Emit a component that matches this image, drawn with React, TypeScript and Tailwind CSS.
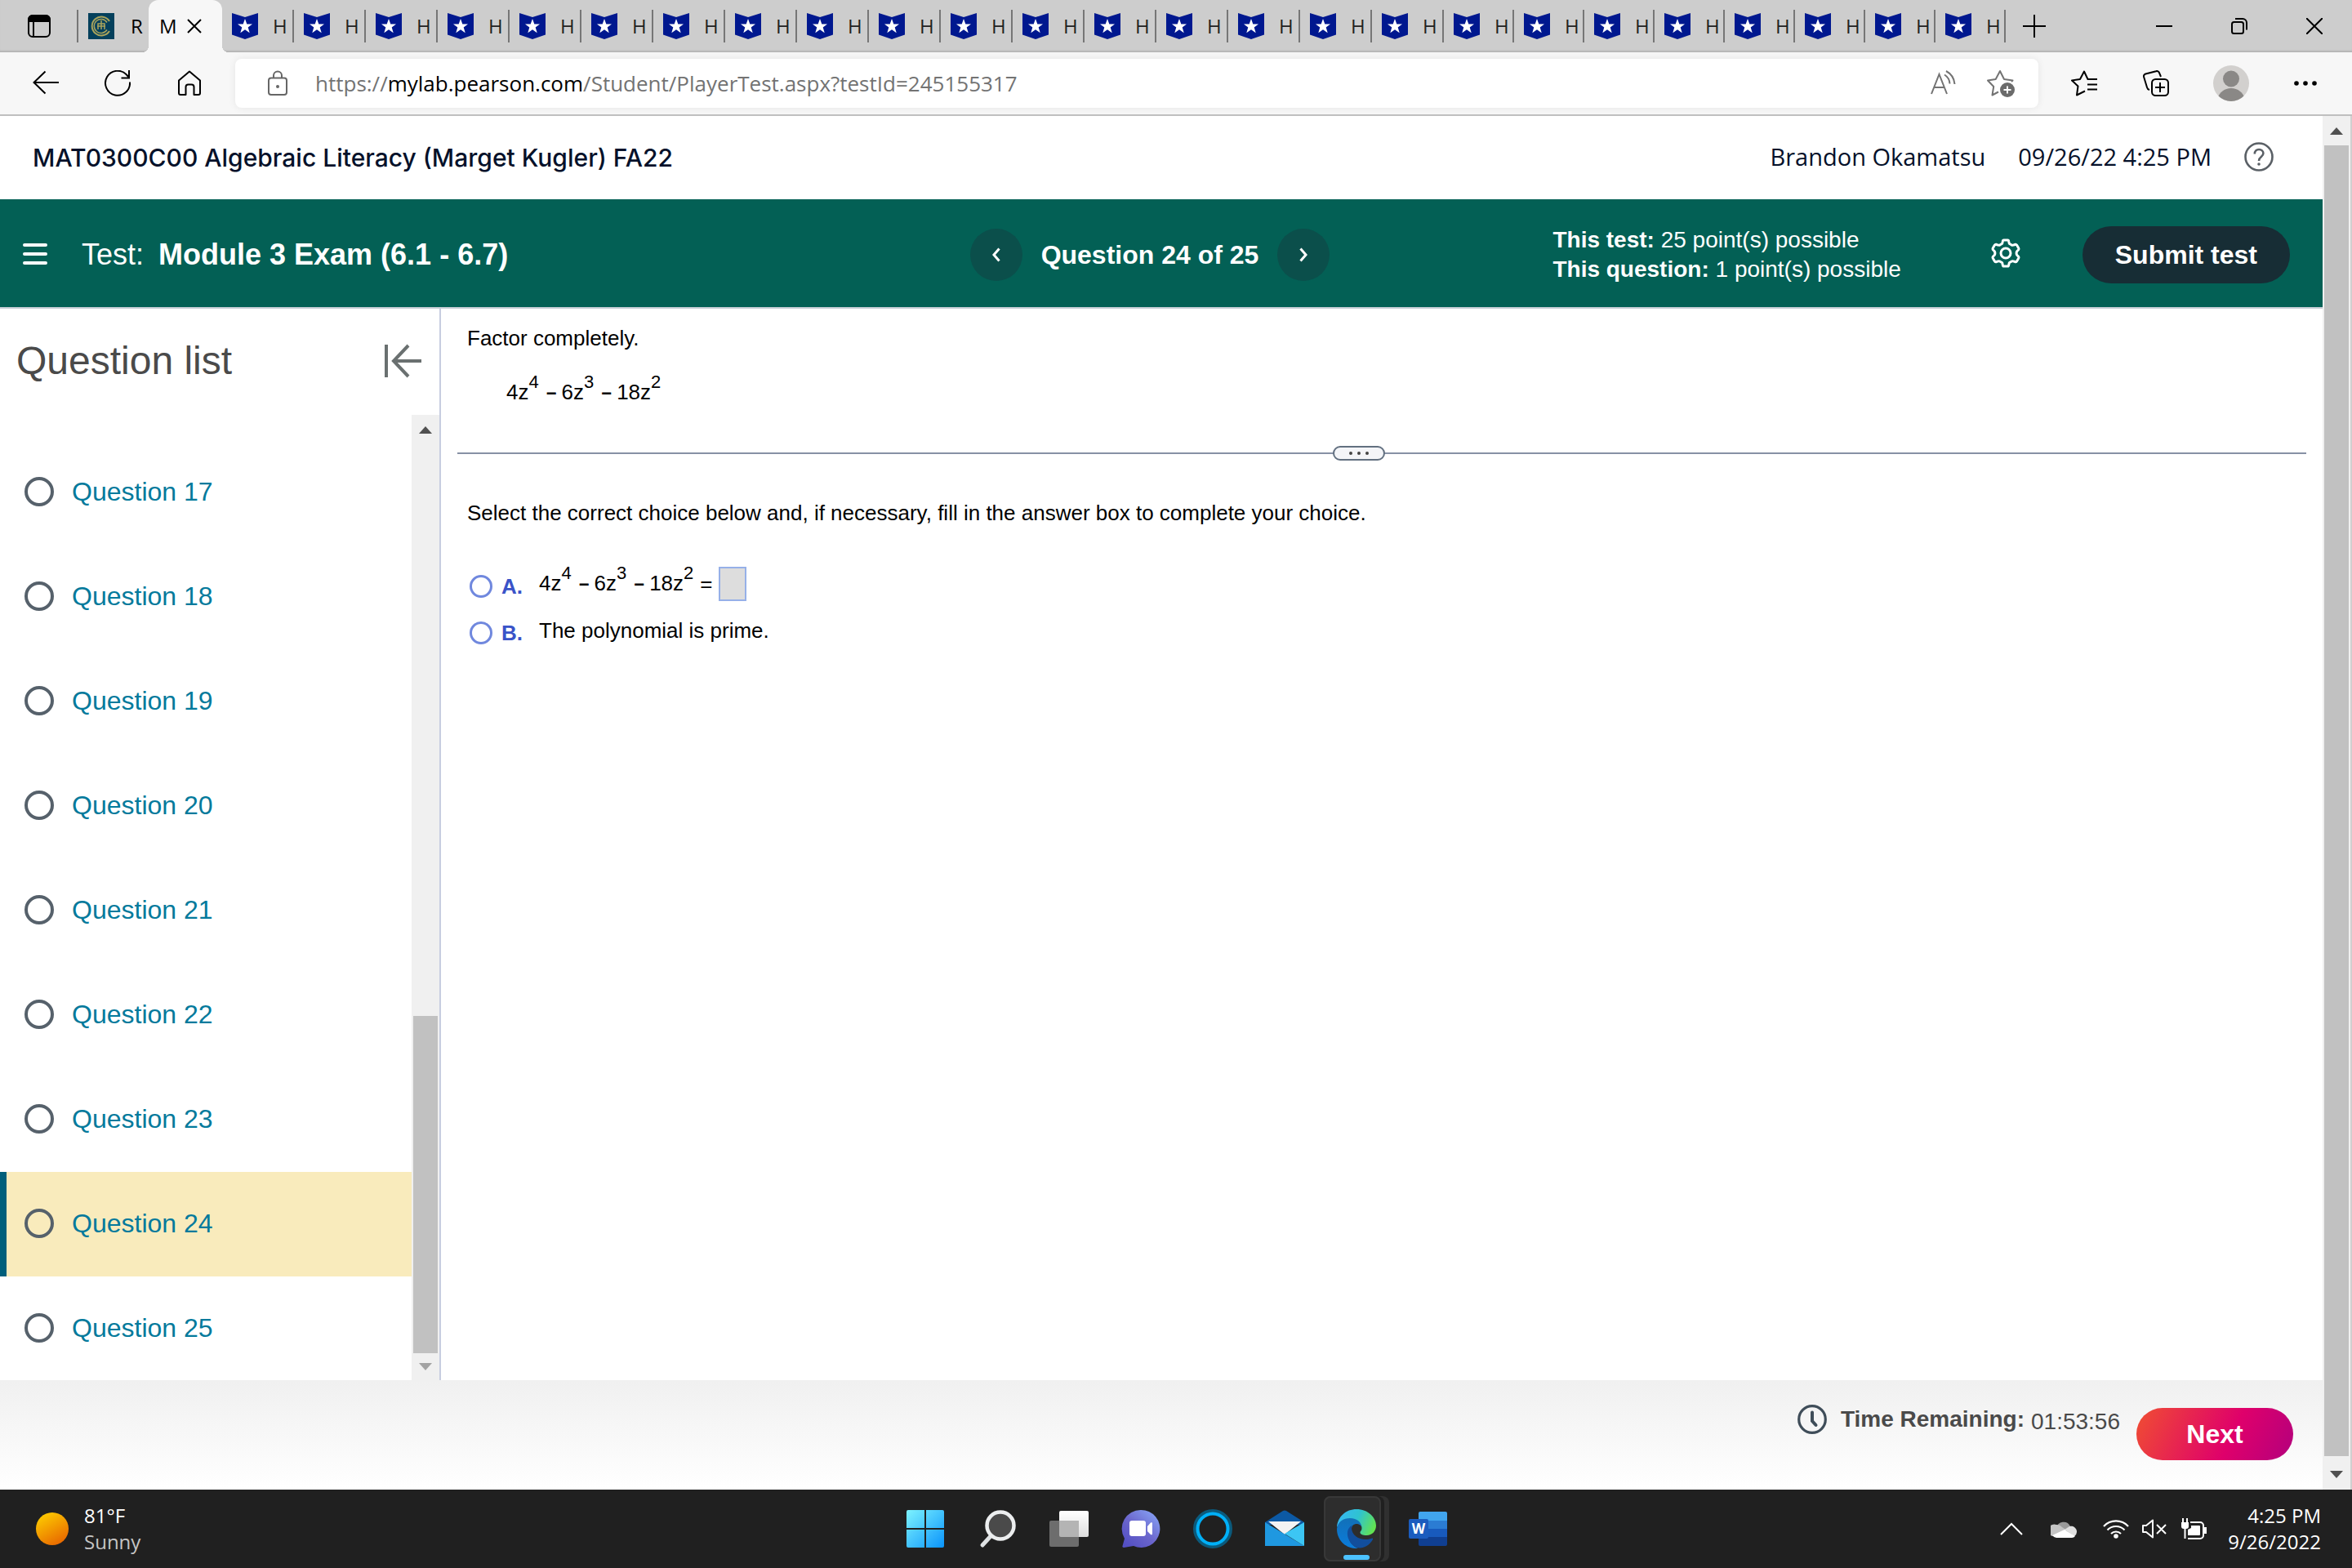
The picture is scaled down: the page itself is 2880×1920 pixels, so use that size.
import React, { useState } from "react"

const ui = "font-['Open_Sans',sans-serif]"
const arial = "font-['Liberation_Sans',sans-serif]"

const tabs = Array.from({ length: 25 }, (_, i) => i)
const questions = [17, 18, 19, 20, 21, 22, 23, 24, 25]

function FlagIcon() {
  return (
    <svg viewBox="0 0 32 32" className="size-8 shrink-0" aria-hidden="true">
      <path d="M0 0l16 5L32 0v26.500L16 32 0 26.500z" fill="#00188f" />
      <path d="M16 7l2.300 6.500h6.700l-5.300 4 2 6.700L16 20.200l-5.700 4 2-6.700-5.300-4h6.700z" fill="#fff" />
    </svg>
  )
}

function TabStrip() {
  return (
    <div className={`flex h-16 bg-[#cdcdcd] text-2xl text-black shadow-[inset_0_-3px_3px_-2px_rgba(0,0,0,0.2)] ${ui}`}>
      <button aria-label="Tab actions" className="flex w-[94px] shrink-0 items-center justify-center pl-[2px]">
        <svg viewBox="0 0 28 28" className="size-7" fill="none" stroke="#000" strokeWidth="2">
          <rect x="1" y="1" width="26" height="26" rx="5" />
          <path d="M1 8V6a5 5 0 0 1 5-5h16a5 5 0 0 1 5 5v2z" fill="#000" />
          <path d="M7 8v19" />
        </svg>
      </button>
      <div className="flex w-[88px] shrink-0 items-center">
        <span className="h-10 w-[2px] shrink-0 bg-[#767676]" />
        <svg viewBox="0 0 32 32" className="ml-3 size-8 shrink-0" fill="none" stroke="#a8a35c">
          <rect width="32" height="32" fill="#04405c" stroke="none" />
          <path d="M26 10A11.500 11.500 0 1 0 26 22" strokeWidth="2" />
          <path d="M23 11.500A8.500 8.500 0 1 0 23 20.500" strokeWidth="1.500" />
          <path d="M12 20v-7h8v7M16 9v11M11 16h10" strokeWidth="1.500" />
        </svg>
        <span className="ml-5">R</span>
      </div>
      <div className="relative flex w-[90px] shrink-0 items-center gap-3 rounded-t-xl bg-[#f7f7f7] pl-[13px]">
        <span className="absolute bottom-0 -left-2 size-2 bg-[radial-gradient(circle_at_0_0,transparent_8px,#f7f7f7_8px)]" />
        <span className="absolute -right-2 bottom-0 size-2 bg-[radial-gradient(circle_at_100%_0,transparent_8px,#f7f7f7_8px)]" />
        <span>M</span>
        <button aria-label="Close tab">
          <svg viewBox="0 0 18 18" className="size-[18px]" stroke="#000" strokeWidth="2">
            <path d="M1 1l16 16M17 1L1 17" />
          </svg>
        </button>
      </div>
      {tabs.map((t) => (
        <div key={t} className={`flex shrink-0 items-center pl-3 ${t < 17 ? "w-[88px]" : "w-[86px]"}`}>
          <FlagIcon />
          <span className="ml-[18px] text-[#222]">H</span>
          <span className="ml-auto h-10 w-[2px] shrink-0 bg-[#767676]" />
        </div>
      ))}
      <button aria-label="New tab" className="ml-[21px] flex items-center">
        <svg viewBox="0 0 28 28" className="size-7" stroke="#000" strokeWidth="2">
          <path d="M14 0v28M0 14h28" />
        </svg>
      </button>
      <div className="ml-auto flex">
        <button aria-label="Minimize" className="flex w-[92px] items-center justify-center">
          <svg viewBox="0 0 20 20" className="size-5" stroke="#000" strokeWidth="2"><path d="M0 10h20" /></svg>
        </button>
        <button aria-label="Restore" className="flex w-[92px] items-center justify-center">
          <svg viewBox="0 0 20 20" className="size-5" fill="none" stroke="#000" strokeWidth="2">
            <rect x="1" y="5" width="14" height="14" rx="2.500" />
            <path d="M5 1h9a5 5 0 0 1 5 5v8.500" />
          </svg>
        </button>
        <button aria-label="Close" className="flex w-[92px] items-center justify-center">
          <svg viewBox="0 0 20 20" className="size-5" stroke="#000" strokeWidth="2"><path d="M0 0l20 20M20 0L0 20" /></svg>
        </button>
      </div>
    </div>
  )
}

function Toolbar() {
  return (
    <div className={`flex h-[78px] items-center border-b-2 border-[#bfbfbf] bg-[#f7f7f7] ${ui}`}>
      <div className="flex w-72 shrink-0 items-center gap-14 pl-10">
        <button aria-label="Back">
          <svg viewBox="0 0 32 32" className="size-8" fill="none" stroke="#000" strokeWidth="2"><path d="M32 15H1.500M15.500 1.500L1.500 15l14 13.500" /></svg>
        </button>
        <button aria-label="Refresh">
          <svg viewBox="0 0 32 32" className="size-8" fill="none" stroke="#000" strokeWidth="2">
            <path d="M31 14.500A15 15 0 1 1 27 5.500L30 9" />
            <path d="M30 0v9.500h-9.500" />
          </svg>
        </button>
        <button aria-label="Home">
          <svg viewBox="0 0 32 32" className="size-8" fill="none" stroke="#000" strokeWidth="2">
            <path d="M3 12.500L16 1.500l13 11V28a2 2 0 0 1-2 2h-5.500v-9.500a3 3 0 0 0-3-3h-4a3 3 0 0 0-3 3V30H5a2 2 0 0 1-2-2z" strokeLinejoin="round" />
          </svg>
        </button>
      </div>
      <div className="flex h-[60px] flex-1 items-center rounded-lg bg-white pr-7 pl-10 shadow-[0_0_10px_rgba(0,0,0,0.08)]">
        <svg viewBox="0 0 24 32" className="h-8 w-6 shrink-0" fill="none" stroke="#666" strokeWidth="2">
          <rect x="1" y="9.500" width="22" height="20.500" rx="3" />
          <path d="M7 9.500V6.500a5 5 0 0 1 10 0v3" />
          <circle cx="12" cy="20" r="2" fill="#666" stroke="none" />
        </svg>
        <a href="#url" className="ml-[34px] text-[26px] text-[#737373]">
          https://<span className="text-black">mylab.pearson.com</span>/Student/PlayerTest.aspx?testId=245155317
        </a>
        <button aria-label="Read aloud" className="ml-auto">
          <svg viewBox="0 0 32 32" className="size-8" fill="none" stroke="#737373" strokeWidth="2">
            <path d="M1 29L10.500 5 20 29M4 21h13" />
            <path d="M17 5.500a14 14 0 0 1 6.500 11M19 1a20 20 0 0 1 10.500 16" />
          </svg>
        </button>
        <button aria-label="Add to favorites" className="ml-9">
          <svg viewBox="0 0 36 36" className="size-9" fill="none" stroke="#737373" strokeWidth="2">
            <path d="M15 28.500l-7.500 4 1.700-10.500L2 14.500l9.700-1.500L17 3l5 10 10.500 1.500-1.500 1.500" strokeLinejoin="round" />
            <circle cx="26" cy="26" r="9" fill="#6b6b6b" stroke="none" />
            <path d="M26 21.500v9M21.500 26h9" stroke="#fff" />
          </svg>
        </button>
      </div>
      <div className="flex shrink-0 items-center pr-[42px] pl-10">
        <button aria-label="Favorites">
          <svg viewBox="0 0 32 32" className="size-8" fill="none" stroke="#000" strokeWidth="2" strokeLinejoin="round">
            <path d="M32 11H20.500L16 1.500 11 11 1 12.500l7.500 7L7 30.500l10-5" />
            <path d="M20 17.500h12M20 23.500h12" />
          </svg>
        </button>
        <button aria-label="Collections" className="ml-14">
          <svg viewBox="0 0 32 32" className="size-8" fill="none" stroke="#000" strokeWidth="2">
            <rect x="11" y="11" width="20" height="20" rx="4.500" />
            <path d="M21 15v12M15 21h12M8 24a4 4 0 0 1-3-3L1.200 8.500a3 3 0 0 1 2-4L16 1.200a3 3 0 0 1 4 2L22 8" />
          </svg>
        </button>
        <button aria-label="Profile" className="ml-[54px]">
          <svg viewBox="0 0 44 44" className="size-11">
            <clipPath id="avatar"><circle cx="22" cy="22" r="22" /></clipPath>
            <g clipPath="url(#avatar)">
              <rect width="44" height="44" fill="#d2d0ce" />
              <circle cx="22" cy="16.500" r="10" fill="#8a8886" />
              <path d="M5 42c2-9 9-14 17-14s15 5 17 14v2H5z" fill="#8a8886" />
            </g>
          </svg>
        </button>
        <button aria-label="Settings and more" className="ml-[54px]">
          <svg viewBox="0 0 30 30" className="size-[30px]">
            <circle cx="4" cy="15" r="2.800" /><circle cx="15" cy="15" r="2.800" /><circle cx="26" cy="15" r="2.800" />
          </svg>
        </button>
      </div>
    </div>
  )
}

function CourseHeader() {
  return (
    <header className="flex h-[102px] shrink-0 items-center pr-[60px] pl-10 text-[#05112a]">
      <h1 className="font-['Inter',sans-serif] text-[30px] font-medium">MAT0300C00 Algebraic Literacy (Marget Kugler) FA22</h1>
      <div className={`ml-auto flex items-center pb-[2px] text-[29px] ${ui}`}>
        <span>Brandon Okamatsu</span>
        <span className="ml-10">09/26/22 4:25 PM</span>
        <button aria-label="Help" className="ml-10">
          <svg viewBox="0 0 36 36" className="size-9" fill="none" stroke="#5a6066" strokeWidth="2.600">
            <circle cx="18" cy="18" r="16.500" />
            <path d="M12.800 14.500c0-3.500 2.200-5.500 5.300-5.500s5.300 2 5.300 4.800c0 4.200-5.300 4.200-5.300 8.700v.5" />
            <circle cx="18" cy="27" r="1.800" fill="#5a6066" stroke="none" />
          </svg>
        </button>
      </div>
    </header>
  )
}

function TestBar() {
  return (
    <div className="grid h-[134px] shrink-0 grid-cols-[1fr_440px_1fr] items-center border-b-2 border-[#c7cfd6] bg-[#036055] pt-1 pr-10 pl-3 text-white">
      <div className="flex items-center pl-4">
        <button aria-label="Menu">
          <svg viewBox="0 0 30 28" className="h-7 w-[30px]" stroke="#fff" strokeWidth="4" strokeLinecap="round">
            <path d="M2 2h26M2 13h26M2 24h26" />
          </svg>
        </button>
        <span className="ml-[42px] text-4xl">Test:</span>
        <h2 className="ml-[18px] text-4xl font-bold">Module 3 Exam (6.1 - 6.7)</h2>
      </div>
      <div className="flex items-center justify-between">
        <button aria-label="Previous question" className="flex size-16 items-center justify-center rounded-full bg-[#0b4f4b]">
          <svg viewBox="0 0 12 18" className="h-[18px] w-3" fill="none" stroke="#fff" strokeWidth="3"><path d="M9.500 1.500L3 9l6.500 7.500" /></svg>
        </button>
        <span className="text-[32px] font-bold">Question 24 of 25</span>
        <button aria-label="Next question" className="flex size-16 items-center justify-center rounded-full bg-[#0b4f4b]">
          <svg viewBox="0 0 12 18" className="h-[18px] w-3" fill="none" stroke="#fff" strokeWidth="3"><path d="M2.500 1.500L9 9l-6.500 7.500" /></svg>
        </button>
      </div>
      <div className="flex items-center justify-end">
        <div className="text-[28px] leading-9">
          <p><b>This test:</b> 25 point(s) possible</p>
          <p><b>This question:</b> 1 point(s) possible</p>
        </div>
        <button aria-label="Settings" className="ml-[110px] pb-1">
          <svg viewBox="0 0 36 36" className="size-9" fill="none" stroke="#fff" strokeWidth="3" strokeLinejoin="round">
            <path d="M15.500 2h5q1 0 1.200 1.500l.6 2.700 2.500 1.500q1.500 1 3 .3l1.700-.7q1.300-.3 2 .8l2.200 3.700q.6 1.200-.3 2.200l-1.700 1.700q-1.200 2.300 0 4.600l1.700 1.700q.9 1 .3 2.200l-2.200 3.700q-.7 1.100-2 .8l-1.700-.7q-1.500-.7-3 .3l-2.500 1.500-.6 2.700Q21.500 34 20.500 34h-5q-1 0-1.200-1.500l-.6-2.700-2.500-1.500q-1.500-1-3-.3l-1.700.7q-1.300.3-2-.8l-2.200-3.700q-.6-1.200.3-2.200l1.700-1.700q1.200-2.300 0-4.600l-1.700-1.700q-.9-1-.3-2.200L4.500 8.100q.7-1.100 2-.8l1.700.7q1.500.7 3-.3l2.500-1.500.6-2.700Q14.500 2 15.500 2z" />
            <circle cx="18" cy="18" r="6" />
          </svg>
        </button>
        <button className="ml-[76px] h-[70px] rounded-full bg-[#172d35] px-10 text-[32px] font-bold">Submit test</button>
      </div>
    </div>
  )
}

function Arrow({ up, color }: { up?: boolean; color: string }) {
  return (
    <svg viewBox="0 0 16 9" className="h-[9px] w-4" fill={color}>
      <path d={up ? "M0 9L8 0l8 9z" : "M0 0l8 9 8-9z"} />
    </svg>
  )
}

function QuestionList() {
  const [current, setCurrent] = useState(24)
  return (
    <aside className="flex w-[540px] shrink-0 flex-col border-r-2 border-[#c7cde0]">
      <div className="flex h-[130px] shrink-0 items-center justify-between pr-[22px] pb-[2px] pl-5">
        <h2 className="text-[48px] leading-none text-[#4a4a4a]">Question list</h2>
        <button aria-label="Collapse question list">
          <svg viewBox="0 0 46 42" className="h-[42px] w-[46px]" fill="none" stroke="#6a7070" strokeWidth="4">
            <path d="M3 1v40M46 21H12M30 2L12 21l18 19" />
          </svg>
        </button>
      </div>
      <div className="flex min-h-0 flex-1">
        <ul className="flex flex-1 flex-col pt-[31px]">
          {questions.map((q) => (
            <li key={q}>
              <button
                onClick={() => setCurrent(q)}
                className={`flex h-32 w-full items-center gap-[22px] border-l-8 pb-[2px] pl-[22px] text-[32px] text-[#047a9c] ${
                  q === current ? "border-[#005f7b] bg-[#f9ebbc]" : "border-transparent"
                }`}
              >
                <span className="size-9 rounded-full border-4 border-[#56616b]" />
                Question {q}
              </button>
            </li>
          ))}
        </ul>
        <div className="flex w-[34px] flex-col items-center bg-[#f0f0f0] pt-[14px] pb-[12px]">
          <Arrow up color="#505050" />
          <div className="mt-auto mb-[12px] h-[413px] w-[30px] bg-[#c1c1c1]" />
          <Arrow color="#a3a3a3" />
        </div>
      </div>
    </aside>
  )
}

function Minus() {
  return <span className="mr-[6px] ml-[9px] text-[22px] font-bold">−</span>
}

function Polynomial() {
  return (
    <span className="flex items-baseline">
      4z<span className="-translate-y-[14px] text-[22px]">4</span>
      <Minus />
      6z<span className="-translate-y-[14px] text-[22px]">3</span>
      <Minus />
      18z<span className="-translate-y-[14px] text-[22px]">2</span>
    </span>
  )
}

const radio = "size-7 shrink-0 appearance-none rounded-full border-3 border-[#7088de] bg-white checked:bg-[#7088de]"
const choiceLabel = "flex w-[88px] items-center pt-[6px] pl-[3px] font-bold text-[#3a53c8]"

function Exercise() {
  return (
    <main className="flex-1 px-5 text-[26px] leading-[30px] text-black">
      <div className="flex h-[176px] flex-col pt-[21px] pl-3">
        <p>Factor completely.</p>
        <p className="mt-[36px] pl-12"><Polynomial /></p>
      </div>
      <div className="relative h-[2px] bg-[#8791a5]">
        <button aria-label="Resize panes" className="absolute -top-2 left-[1072px] flex h-[18px] w-16 items-center justify-center gap-[6px] rounded-full border-2 border-[#627080] bg-[#f4f5f8]">
          <span className="size-1 rounded-full bg-[#444]" />
          <span className="size-1 rounded-full bg-[#444]" />
          <span className="size-1 rounded-full bg-[#444]" />
        </button>
      </div>
      <fieldset className="pt-[57px] pl-3">
        <legend className="contents">Select the correct choice below and, if necessary, fill in the answer box to complete your choice.</legend>
        <div className="mt-[45px] flex h-[54px] items-center">
          <label htmlFor="choice-a" className={choiceLabel}>
            <input id="choice-a" type="radio" name="choice" className={radio} />
            <span className="ml-[11px]">A.</span>
          </label>
          <Polynomial />
          <span className="mr-[7px] ml-[8px]">=</span>
          <input aria-label="Answer" className="h-[42px] w-[34px] border-2 border-[#96b0e8] bg-[#ddd]" />
        </div>
        <div className="mt-[3px] flex h-[54px] items-center">
          <label htmlFor="choice-b" className={choiceLabel}>
            <input id="choice-b" type="radio" name="choice" className={radio} />
            <span className="ml-[11px]">B.</span>
          </label>
          <span>The polynomial is prime.</span>
        </div>
      </fieldset>
    </main>
  )
}

function TestFooter() {
  return (
    <footer className="flex h-[134px] shrink-0 items-start justify-end bg-linear-to-b from-[#f0f0f0] to-white pt-[30px] pr-9 text-[28px] text-[#4a4a4a]">
      <svg viewBox="0 0 36 36" className="size-9" fill="none" stroke="#3f4d59" strokeWidth="3.200" strokeLinecap="round">
        <circle cx="18" cy="18" r="16.300" />
        <path d="M18 9.500V20l4.500 5" strokeWidth="4" />
      </svg>
      <p className="ml-[17px] flex items-start leading-9">
        <b>Time Remaining:</b>
        <span className="ml-[8px] pt-[3px]">01:53:56</span>
      </p>
      <button className="mt-1 ml-5 h-16 w-48 rounded-full bg-linear-[115deg] from-[#f04e32] via-[#df006b] via-60% to-[#b3007d] text-[32px] font-bold text-white">Next</button>
    </footer>
  )
}

const apps = [
  {
    label: "Start",
    icon: (
      <>
        <linearGradient id="win" x1="0" y1="0" x2="1" y2="1" gradientUnits="objectBoundingBox">
          <stop offset="0" stopColor="#7df3ff" /><stop offset="1" stopColor="#0a94fb" />
        </linearGradient>
        <path fill="url(#win)" d="M3 1h20v22H1V3a2 2 0 0 1 2-2zM25 1h20a2 2 0 0 1 2 2v20H25zM1 25h22v22H3a2 2 0 0 1-2-2zM25 25h22v20a2 2 0 0 1-2 2H25z" />
      </>
    ),
  },
  {
    label: "Search",
    icon: (
      <>
        <path d="M17 32L6 44" stroke="#dfe2e4" strokeWidth="5" strokeLinecap="round" />
        <circle cx="28" cy="20" r="16.500" fill="#4a4a4a" stroke="#eceeef" strokeWidth="4.500" />
      </>
    ),
  },
  {
    label: "Task view",
    icon: (
      <>
        <linearGradient id="tv" x1="0" y1="0" x2="0" y2="1"><stop stopColor="#fff" /><stop offset="1" stopColor="#ddd" /></linearGradient>
        <rect x="12" y="2" width="36" height="32" rx="2" fill="url(#tv)" />
        <rect x="0" y="14" width="36" height="32" rx="2" fill="#6d6d6d" />
        <path d="M12 14h24v20H14a2 2 0 0 1-2-2z" fill="#b4b4b4" />
      </>
    ),
  },
  {
    label: "Chat",
    icon: (
      <>
        <linearGradient id="chat" x1=".1" y1=".9" x2=".8" y2=".1">
          <stop stopColor="#5450c4" /><stop offset=".5" stopColor="#6b66cc" /><stop offset="1" stopColor="#8298ee" />
        </linearGradient>
        <path d="M24 1a23 23 0 1 1-9 44L3 47c-1 0-2-1-1.500-2l2.500-9A23 23 0 0 1 24 1z" fill="url(#chat)" />
        <rect x="10" y="14" width="20" height="19" rx="3" fill="#fff" />
        <path d="M32 21l4-4.500c.7-.7 2-.3 2 .7v13c0 1-1.300 1.500-2 .7L32 27z" fill="#fff" />
      </>
    ),
  },
  {
    label: "Cortana",
    icon: (
      <>
        <circle cx="24" cy="24" r="22" fill="none" stroke="#0b5a7c" strokeWidth="4" />
        <circle cx="24" cy="24" r="18.500" fill="none" stroke="#00b0f8" strokeWidth="4" />
      </>
    ),
  },
  {
    label: "Mail",
    icon: (
      <>
        <path d="M0 16L22 2a4 4 0 0 1 4 0l22 14v3H0z" fill="#0c59a4" />
        <path d="M4 15h40L24 31z" fill="#f3f3f3" />
        <path d="M0 16l48 29H0z" fill="#1f98e0" />
        <path d="M48 16v29L24 30z" fill="#3cc6f4" />
      </>
    ),
  },
  {
    label: "Microsoft Edge",
    icon: (
      <>
        <linearGradient id="edge-top" x1="0" y1=".3" x2="1" y2=".6">
          <stop stopColor="#36b8f4" /><stop offset=".5" stopColor="#2fc3d0" /><stop offset="1" stopColor="#64e34e" />
        </linearGradient>
        <linearGradient id="edge-low" x1="0" y1="0" x2="0" y2="1"><stop stopColor="#1270b8" /><stop offset="1" stopColor="#0a7cdc" /></linearGradient>
        <path d="M0 22C1 9 11 0 24 0c14 0 24 10 24 20 0 7-5 12-11.500 12-5 0-8-1.500-8-3.500 0-1.500 2-2 2-5.500 0-5-5-9-12-9C10 14 3 17 0 22z" fill="url(#edge-top)" />
        <path d="M0 24C1 15 8 11 16 11c9 0 14 5 14.500 11.500C30 19.500 27 18 24 18c-3 0-6 2-6 6l-4 6c0 8 4 15 12 18C11 49 0 38 0 24z" fill="url(#edge-low)" />
        <path d="M19 19.500C12 23 11.500 31 15 38c3 6 8 10 14 9.500 7-1 12-5 15-10.500.5-1-.5-1.800-1.500-1.300C32 40 18 34 18 23z" fill="#124e9c" />
      </>
    ),
  },
  {
    label: "Word",
    icon: (
      <>
        <path d="M14 3h31a2 2 0 0 1 2 2v9H12V5a2 2 0 0 1 2-2z" fill="#41a5ee" />
        <path d="M12 14h35v10H12z" fill="#2b7cd3" />
        <path d="M12 24h35v10H12z" fill="#185abd" />
        <path d="M12 34h35v9a2 2 0 0 1-2 2H14a2 2 0 0 1-2-2z" fill="#103f91" />
        <rect x="0" y="12" width="24" height="24" rx="2" fill="#1b5cbe" />
        <text x="12" y="30" textAnchor="middle" fontSize="17" fontWeight="700" fontFamily="Open Sans" fill="#fff">W</text>
      </>
    ),
  },
]

function Taskbar() {
  return (
    <div className={`grid h-24 shrink-0 grid-cols-[1fr_auto_1fr] items-center bg-[#202020] pr-[38px] pl-10 text-2xl leading-8 text-white ${ui}`}>
      <div className="flex items-center gap-[19px] pl-1">
        <span className="size-10 rounded-full bg-linear-[150deg] from-[#ffd600] to-[#e55a00]" />
        <div>
          <p>81°F</p>
          <p className="text-[#c5c5c5]">Sunny</p>
        </div>
      </div>
      <div className="flex gap-2">
        {apps.map((app) => {
          const open = app.label === "Microsoft Edge"
          return (
            <button
              key={app.label}
              aria-label={app.label}
              className={`relative flex size-20 items-center justify-center rounded-lg ${open ? "bg-[#303030]" : ""}`}
            >
              {open && <span className="absolute inset-y-0 right-[10px] left-0 rounded-lg border-2 border-[#383838] bg-[#2d2d2d] shadow-[4px_0_0_#202020]" />}
              <svg viewBox="0 0 48 48" className="relative size-12">{app.icon}</svg>
              {open && <span className="absolute bottom-[2px] h-[6px] w-8 rounded-full bg-[#4cc2ff]" />}
            </button>
          )
        })}
      </div>
      <div className="flex items-center justify-end">
        <svg viewBox="0 0 28 16" className="h-4 w-7" fill="none" stroke="#fff" strokeWidth="2"><path d="M1 15L14 2l13 13" /></svg>
        <svg viewBox="0 0 32 22" className="ml-[34px] h-[22px] w-8">
          <path d="M7 10a9 9 0 0 1 17-2l-9 6z" fill="#9a9a9a" />
          <path d="M7 6a8 8 0 0 1 7 3l6 4-18 7A7 7 0 0 1 7 6z" fill="#c4c4c4" />
          <path d="M17 12l6-4a7 7 0 0 1 9 7 6 6 0 0 1-3 5z" fill="#e0e0e0" />
          <path d="M2 19l15-7 13 8a6 6 0 0 1-4 2H7a7 7 0 0 1-5-3z" fill="#fff" />
        </svg>
        <svg viewBox="0 0 32 24" className="ml-8 h-6 w-8" fill="none" stroke="#fff" strokeWidth="2.200">
          <path d="M1 9a20.500 20.500 0 0 1 30 0M5.500 13.500a14.500 14.500 0 0 1 21 0M10 18a8.500 8.500 0 0 1 12 0" />
          <circle cx="16" cy="21" r="2.800" fill="#fff" stroke="none" />
        </svg>
        <svg viewBox="0 0 32 24" className="ml-[15px] h-6 w-8" fill="none" stroke="#fff" strokeWidth="2">
          <path d="M2 8h4l8-6.500v21L6 16H2zM19 7l11 11M30 7L19 18" strokeLinejoin="round" />
        </svg>
        <svg viewBox="0 0 32 26" className="ml-4 h-[26px] w-8" fill="none" stroke="#fff" strokeWidth="2">
          <path d="M12 5h12a4 4 0 0 1 4 4v12a4 4 0 0 1-4 4H9" />
          <path d="M13 9h10a1 1 0 0 1 1 1v10a1 1 0 0 1-1 1H9v-7l4-2z" fill="#fff" stroke="none" />
          <path d="M29 11h3v8h-3z" fill="#fff" stroke="none" />
          <path d="M1 5h9v5a3 3 0 0 1-3 3H4a3 3 0 0 1-3-3z" fill="#fff" stroke="none" />
          <path d="M3 0v5M8 0v5M5.500 12v13" />
        </svg>
        <div className="ml-[26px] text-right">
          <p>4:25 PM</p>
          <p>9/26/2022</p>
        </div>
      </div>
    </div>
  )
}

export default function App() {
  return (
    <div className={`flex h-screen min-w-0 flex-col overflow-hidden bg-white ${arial}`}>
      <TabStrip />
      <Toolbar />
      <div className="flex min-h-0 flex-1">
        <div className="flex min-w-0 flex-1 flex-col">
          <CourseHeader />
          <TestBar />
          <div className="flex min-h-0 flex-1">
            <QuestionList />
            <Exercise />
          </div>
          <TestFooter />
        </div>
        <div className="flex w-9 shrink-0 flex-col items-center border-r-2 border-[#d0d0d0] bg-[#f0f0f0] py-[14px]">
          <Arrow up color="#505050" />
          <div className="mt-[13px] mb-[18px] w-[30px] flex-1 bg-[#c1c1c1]" />
          <Arrow color="#505050" />
        </div>
      </div>
      <Taskbar />
    </div>
  )
}
